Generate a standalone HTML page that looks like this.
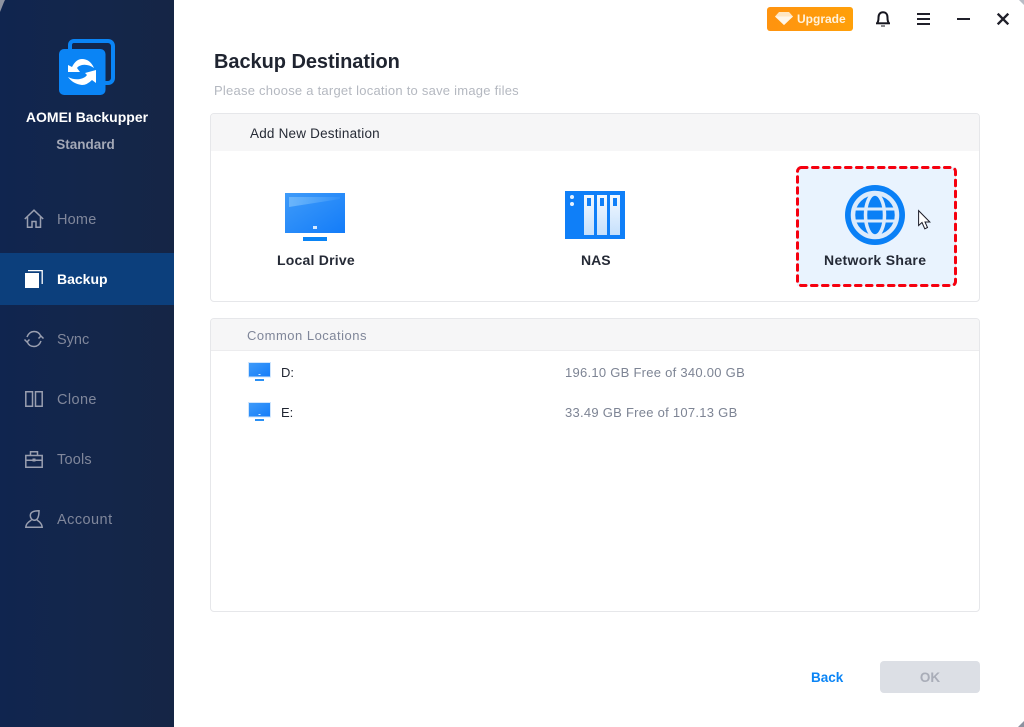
<!DOCTYPE html>
<html><head><meta charset="utf-8"><style>
html,body{margin:0;padding:0;background:#fff}
#p{position:relative;width:1024px;height:727px;overflow:hidden;background:#fff;font-family:"Liberation Sans",sans-serif}
.t{position:absolute;white-space:nowrap;line-height:20px}
.a{position:absolute}
svg{position:absolute;overflow:visible}
.n{font-size:14.5px;color:#80879b;left:57px;letter-spacing:.2px}
.i{fill:none;stroke:#9a9fb0;stroke-width:1.5}
</style></head><body><div id="p">
<div class="a" style="left:0;top:0;width:174px;height:727px;background:linear-gradient(90deg,#10254f 0%,#14264a 60%,#152545 100%)"></div>
<svg style="left:0;top:0" width="5" height="12"><path d="M0 12L4 2L5 0H0Z" fill="#8d92a0"/></svg>

<!-- logo -->
<svg style="left:59px;top:39px" width="57" height="57" viewBox="0 0 57 57">
<path d="M9 10V6C9 2.500 11.500 0 15 0H49C53 0 56 3 56 7V39C56 43 53 46 49 46H46.500V42H49C50.500 42 52 40.500 52 39V7C52 5.500 50.500 4 49 4H15C13.500 4 13 5 13 6V10Z" fill="#0a84f5"/>
<rect x="0" y="10" width="46.500" height="46" rx="5" fill="#0a84f5"/>
<path d="M9 33V26L13 28Q17 20 23 20Q31 20 35 29Q29 25 23 26Q19 27 18 29L21 33Z" fill="#fff"/>
<path d="M37 31V44L33 41Q28 46 23 46Q14 45 9 38Q15 41 21 40Q26 39 28 36L26 34Z" fill="#fff"/>
</svg>
<div class="t" style="left:0;width:174px;text-align:center;top:107px;font-size:14px;font-weight:bold;color:#fff">AOMEI Backupper</div>
<div class="t" style="left:-1px;width:173px;text-align:center;top:135px;font-size:13.500px;font-weight:bold;color:#a3a8b6">Standard</div>

<!-- nav -->
<div class="a" style="left:0;top:253px;width:174px;height:52px;background:#0c3f7c"></div>
<svg style="left:24px;top:209px" width="20" height="20" viewBox="0 0 20 20"><path class="i" d="M.8 10L10 1.200L19.200 10M3.500 8V18.300H8V12.500H12V18.300H16.500V8"/></svg>
<div class="t n" style="top:210px">Home</div>
<svg style="left:25px;top:270px" width="18" height="18" viewBox="0 0 18 18"><rect x="0" y="3" width="14" height="15" fill="#fff"/><path d="M3 .6H17.200V14" fill="none" stroke="#fff" stroke-width="1.300"/></svg>
<div class="t" style="left:57px;top:269px;font-size:14px;font-weight:bold;color:#fff">Backup</div>
<svg style="left:24px;top:329px" width="20" height="20" viewBox="0 0 20 20"><path class="i" d="M3 8C4.500 4 7 2.500 10 2.500C13 2.500 15.500 4 16.700 7M17 12C15.500 16 13 17.500 10 17.500C7 17.500 4.500 16 3.300 13"/><path class="i" d="M.5 10.500L3 13L5.500 10.500M14.500 9.500L17 7L19.500 9.500"/></svg>
<div class="t n" style="top:330px;letter-spacing:0">Sync</div>
<svg style="left:25px;top:391px" width="18" height="16" viewBox="0 0 18 16"><path class="i" d="M.8.800H7.500V15.200H.8ZM10.500.800H17.200V15.200H10.500Z"/></svg>
<div class="t n" style="top:390px;letter-spacing:.4px">Clone</div>
<svg style="left:25px;top:451px" width="18" height="17" viewBox="0 0 18 17"><path class="i" d="M.8 4.500H17.200V16.200H.8ZM.8 9.200H17.200M5.500 4.500V.8H12.500V4.500"/><rect x="7.500" y="7.500" width="3" height="3" fill="#9a9fb0"/></svg>
<div class="t n" style="top:450px">Tools</div>
<svg style="left:25px;top:510px" width="18" height="18" viewBox="0 0 18 18"><path class="i" d="M5.300 5.500C5.300 2.500 8 .8 14 .8C14 6 13 10.300 9.300 10.300C7 10.300 5.300 8 5.300 5.500Z"/><path class="i" d="M6.500 10C3 12 .8 14 .8 17.300H17.200C17.200 14 15 12 12 10"/></svg>
<div class="t n" style="top:510px;letter-spacing:.45px">Account</div>

<!-- top bar -->
<div class="a" style="left:767px;top:7px;width:86px;height:24px;border-radius:3px;background:linear-gradient(90deg,#ff930f,#ffa00a)"></div>
<svg style="left:775px;top:12px" width="18" height="13" viewBox="0 0 18 13"><path d="M4 0H14L18 4.500L9 13L0 4.500Z" fill="#ffe6c2"/><path d="M0 4.500H18L9 13Z" fill="#fff6e8"/></svg>
<div class="t" style="left:797px;top:9px;font-size:12px;font-weight:bold;color:#fff2dc">Upgrade</div>
<svg style="left:875px;top:11px" width="16" height="16" viewBox="0 0 16 16"><path d="M2.500 11.500C3.500 10 3.500 8.500 3.500 6.500C3.500 3 5.500 1.300 8 1.300C10.500 1.300 12.500 3 12.500 6.500C12.500 8.500 12.500 10 13.500 11.500" fill="none" stroke="#16161f" stroke-width="2"/><path d="M1 12.300H15" stroke="#16161f" stroke-width="2"/><path d="M6 14.500H10V15.500H6Z" fill="#16161f"/></svg>
<svg style="left:917px;top:13px" width="13" height="12"><path d="M0 1H13M0 6H13M0 11H13" stroke="#20202a" stroke-width="2"/></svg>
<svg style="left:957px;top:18px" width="13" height="2"><rect width="13" height="2" fill="#20202a"/></svg>
<svg style="left:997px;top:13px" width="12" height="12"><path d="M.7.700L11.300 11.300M11.300.700L.7 11.300" stroke="#20202a" stroke-width="2.400"/></svg>
<svg style="left:1019px;top:0" width="5" height="5"><path d="M0 0H5V5Z" fill="#b8bcc5"/></svg>

<!-- heading -->
<div class="t" style="left:214px;top:52px;font-size:20px;font-weight:bold;color:#1f2430;letter-spacing:-.05px">Backup Destination</div>
<div class="t" style="left:214px;top:81px;font-size:13px;color:#b4b8c0;letter-spacing:.24px">Please choose a target location to save image files</div>

<!-- panel 1 -->
<div class="a" style="left:210px;top:113px;width:768px;height:187px;border:1px solid #e6e7ea;border-radius:4px;overflow:hidden">
<div class="a" style="left:0;top:0;width:768px;height:37px;background:#f6f6f7"></div>
</div>
<div class="t" style="left:250px;top:124px;font-size:13.500px;color:#262b36;letter-spacing:.2px">Add New Destination</div>

<svg style="left:285px;top:193px" width="60" height="48" viewBox="0 0 60 48">
<defs><linearGradient id="m" x1="0" y1="0" x2="1" y2="1"><stop offset="0" stop-color="#3f9bf9"/><stop offset="1" stop-color="#137cf9"/></linearGradient>
<linearGradient id="h" x1="0" y1="0" x2="1" y2="0"><stop offset="0" stop-color="#7cc0fc" stop-opacity=".75"/><stop offset="1" stop-color="#7cc0fc" stop-opacity=".1"/></linearGradient></defs>
<rect width="60" height="40" fill="url(#m)"/><path d="M4 4H55V6L4 14Z" fill="url(#h)"/><rect x="28" y="33" width="4" height="3" fill="#d6e9ff"/><rect x="18" y="44" width="24" height="4" fill="#0a84f5"/></svg>
<div class="t" style="left:277px;top:250px;font-size:14px;font-weight:bold;color:#252a36;letter-spacing:.22px">Local Drive</div>

<svg style="left:565px;top:191px" width="60" height="48" viewBox="0 0 60 48">
<defs><linearGradient id="b" x1="0" y1="0" x2="0" y2="1"><stop offset="0" stop-color="#f3f9ff"/><stop offset="1" stop-color="#c6e0fc"/></linearGradient></defs>
<rect width="60" height="48" fill="#0f7ff8"/><circle cx="7" cy="6" r="2" fill="#e6f2ff"/><circle cx="7" cy="13" r="2" fill="#e6f2ff"/>
<rect x="19" y="4" width="10" height="40" fill="url(#b)"/><rect x="32" y="4" width="10" height="40" fill="url(#b)"/><rect x="45" y="4" width="10" height="40" fill="url(#b)"/>
<rect x="22" y="7" width="4" height="8" fill="#0f7ff8"/><rect x="35" y="7" width="4" height="8" fill="#0f7ff8"/><rect x="48" y="7" width="4" height="8" fill="#0f7ff8"/></svg>
<div class="t" style="left:581px;top:250px;font-size:14px;font-weight:bold;color:#252a36">NAS</div>

<div class="a" style="left:797px;top:167px;width:159px;height:119px;background:#e9f3fe"></div>
<svg style="left:796px;top:166px" width="161" height="121"><rect x="1.500" y="1.500" width="158" height="118" rx="4" fill="none" stroke="#f5000f" stroke-width="3" stroke-linecap="round" stroke-dasharray="5.500 5.500"/></svg>
<svg style="left:845px;top:185px" width="60" height="60" viewBox="0 0 60 60">
<circle cx="30" cy="30" r="30" fill="#0a80f6"/>
<circle cx="30" cy="30" r="22" fill="none" stroke="#dcebfc" stroke-width="4.500"/>
<ellipse cx="30" cy="30" rx="9.500" ry="21" fill="none" stroke="#dcebfc" stroke-width="3.500"/>
<path d="M9 24H51M9 36H51" stroke="#dcebfc" stroke-width="3"/>
</svg>
<div class="t" style="left:824px;top:250px;font-size:14px;font-weight:bold;color:#252a36;letter-spacing:.33px">Network Share</div>
<svg style="left:918px;top:210px" width="13" height="20" viewBox="0 0 13 20"><path d="M.6.600V15.500L4 12.500L6.800 18.800L9.500 17.500L7 12H11.800Z" fill="#fff" stroke="#1c1c28" stroke-width="1"/></svg>

<!-- panel 2 -->
<div class="a" style="left:210px;top:318px;width:768px;height:292px;border:1px solid #e6e7ea;border-radius:4px;overflow:hidden">
<div class="a" style="left:0;top:0;width:768px;height:31px;background:#f6f6f7;border-bottom:1px solid #ececee"></div>
</div>
<div class="t" style="left:247px;top:326px;font-size:13px;color:#7f8699;letter-spacing:.5px">Common Locations</div>

<svg style="left:248px;top:362px" width="23" height="19" viewBox="0 0 23 19"><rect x=".5" y=".5" width="22" height="14.500" fill="url(#m)" stroke="#cfe5fd"/><rect x="10.500" y="12" width="2" height="1" fill="#d6e9ff"/><rect x="7" y="17" width="9" height="2" fill="#2a90f5"/></svg>
<div class="t" style="left:281px;top:363px;font-size:13px;color:#1f2430">D:</div>
<div class="t" style="left:565px;top:363px;font-size:13px;color:#7d8494;letter-spacing:.27px">196.10 GB Free of 340.00 GB</div>
<svg style="left:248px;top:402px" width="23" height="19" viewBox="0 0 23 19"><rect x=".5" y=".5" width="22" height="14.500" fill="url(#m)" stroke="#cfe5fd"/><rect x="10.500" y="12" width="2" height="1" fill="#d6e9ff"/><rect x="7" y="17" width="9" height="2" fill="#2a90f5"/></svg>
<div class="t" style="left:281px;top:403px;font-size:13px;color:#1f2430">E:</div>
<div class="t" style="left:565px;top:403px;font-size:13px;color:#7d8494;letter-spacing:.27px">33.49 GB Free of 107.13 GB</div>

<!-- footer -->
<div class="t" style="left:811px;top:668px;font-size:13.500px;font-weight:bold;color:#0a84f5">Back</div>
<div class="a" style="left:880px;top:661px;width:100px;height:32px;border-radius:4px;background:#dcdfe5"></div>
<div class="t" style="left:880px;width:100px;text-align:center;top:668px;font-size:13.500px;font-weight:bold;color:#a9adb8">OK</div>
<svg style="left:1018px;top:721px" width="6" height="6"><path d="M6 0V6H0Z" fill="#8d92a0"/></svg>
</div></body></html>
